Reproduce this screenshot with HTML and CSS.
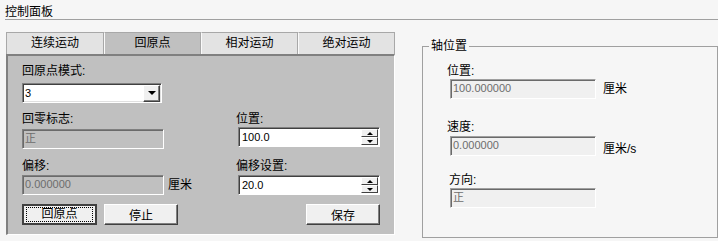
FILE: index.html
```html
<!DOCTYPE html>
<html lang="zh">
  <head>
    <meta charset="UTF-8" />
    <meta name="viewport" content="width=device-width, initial-scale=1.0" />
    <title>控制面板</title>
    <link rel="stylesheet" href="styles.css">
  </head>
  <body>
    <div class="window">
      <div class="window-title">控制面板</div>
      <div class="window-body">
        <div class="tab-area">
          <div class="tabs">
            <div class="tab">连续运动</div>
            <div class="tab active">回原点</div>
            <div class="tab">相对运动</div>
            <div class="tab">绝对运动</div>
          </div>
          <div class="tab-panel">
            <label class="field-label">回原点模式:</label>
            <div class="combo">
              <span class="combo-value">3</span>
              <span class="combo-button"><i class="arrow-down"></i></span>
            </div>

            <div class="form-grid">
              <div class="cell">
                <label class="field-label">回零标志:</label>
                <div class="textbox disabled gap-3">正</div>
              </div>
              <div class="cell">
                <label class="field-label">位置:</label>
                <div class="spin gap-1">
                  <span class="spin-value">100.0</span>
                  <span class="spin-buttons">
                    <span class="spin-btn"><i class="arrow-up"></i></span>
                    <span class="spin-btn"><i class="arrow-down small"></i></span>
                  </span>
                </div>
              </div>
              <div class="cell">
                <label class="field-label">偏移:</label>
                <div class="with-unit gap-2">
                  <div class="textbox disabled">0.000000</div>
                  <span class="unit">厘米</span>
                </div>
              </div>
              <div class="cell">
                <label class="field-label">偏移设置:</label>
                <div class="spin gap-2">
                  <span class="spin-value">20.0</span>
                  <span class="spin-buttons">
                    <span class="spin-btn"><i class="arrow-up"></i></span>
                    <span class="spin-btn"><i class="arrow-down small"></i></span>
                  </span>
                </div>
              </div>
            </div>

            <div class="button-row">
              <button class="btn default"><span class="focus-rect">回原点</span></button>
              <button class="btn">停止</button>
              <button class="btn save">保存</button>
            </div>
          </div>
        </div>

        <fieldset class="group">
          <legend>轴位置</legend>
          <div class="group-body">
            <label class="field-label first">位置:</label>
            <div class="axis-row gap-1">
              <div class="textbox readonly">100.000000</div>
              <span class="unit">厘米</span>
            </div>
            <label class="field-label second">速度:</label>
            <div class="axis-row low gap-2">
              <div class="textbox readonly">0.000000</div>
              <span class="unit">厘米/s</span>
            </div>
            <label class="field-label third">方向:</label>
            <div class="axis-row gap-1">
              <div class="textbox readonly">正</div>
            </div>
          </div>
        </fieldset>
      </div>
    </div>
  </body>
</html>
```

FILE: styles.css
```css
* {
  margin: 0;
  padding: 0;
  box-sizing: border-box;
}

body {
  font-family: "Liberation Sans", "Noto Sans CJK SC", sans-serif;
  font-size: 12px;
  color: #000;
  background-color: #f6f6f6;
  width: 718px;
  height: 241px;
  overflow: hidden;
}

.window-title {
  margin-left: 5px;
  padding-top: 6px;
  height: 20px;
  line-height: 13px;
  border-bottom: 1px solid #a0a0a0;
}

.window-body {
  display: flex;
  align-items: flex-start;
}

/* tabs */
.tab-area {
  margin: 12px 0 0 6px;
  width: 389px;
}

.tabs {
  display: flex;
  height: 22px;
}

.tab {
  width: 97px;
  line-height: 20px;
  text-align: center;
  background-color: #e3e3e3;
  border: 1px solid #a8a8a8;
  border-bottom: none;
  border-left-color: #fafafa;
}

.tab:first-child {
  width: 98px;
  border-left-color: #a8a8a8;
}

.tab.active {
  background-color: #c0c0c0;
}

.tab-panel {
  height: 181px;
  background-color: #c0c0c0;
  border-top: 2px solid #808080;
  border-left: 2px solid #808080;
  border-right: 1px solid #fff;
  border-bottom: 1px solid #fff;
  padding: 8px 14px 0 14px;
}

.field-label {
  display: block;
  line-height: 14px;
}

/* combo */
.combo {
  margin-top: 5px;
  width: 140px;
  height: 20px;
  display: flex;
  align-items: center;
  background-color: #fff;
  border: 1px solid;
  border-color: #808080 #fff #fff #808080;
  box-shadow: inset 1px 1px #404040, inset -1px -1px #e0e0e0;
}

.combo-value {
  flex: 1;
  padding-left: 2px;
  font-size: 11px;
}

.combo-button {
  width: 17px;
  height: 17px;
  margin-right: 1px;
  display: flex;
  align-items: center;
  justify-content: center;
  background-color: #f0f0f0;
  border: 1px solid;
  border-color: #fff #404040 #404040 #fff;
  box-shadow: inset -1px -1px #808080;
}

.arrow-down {
  width: 0;
  height: 0;
  border-left: 4px solid transparent;
  border-right: 4px solid transparent;
  border-top: 4px solid #000;
}

.arrow-down.small,
.arrow-up {
  border-left-width: 3px;
  border-right-width: 3px;
  border-top-width: 3px;
}

.arrow-up {
  width: 0;
  height: 0;
  border-left: 3px solid transparent;
  border-right: 3px solid transparent;
  border-top: none;
  border-bottom: 3px solid #000;
}

/* grid */
.form-grid {
  display: grid;
  grid-template-columns: 214px 144px;
  row-gap: 10px;
  margin-top: 9px;
}

.gap-1 { margin-top: 1px; }
.gap-2 { margin-top: 2px; }
.gap-3 { margin-top: 3px; }

.textbox {
  width: 142px;
  height: 20px;
  line-height: 16px;
  padding-left: 2px;
  font-size: 11px;
  border: 1px solid;
  border-color: #808080 #fff #fff #808080;
  box-shadow: inset 1px 1px #6a6a6a;
}

.textbox.disabled {
  background-color: #c0c0c0;
  color: #6d6d6d;
}

.with-unit {
  display: flex;
  align-items: center;
  gap: 4px;
}

.unit {
  line-height: 14px;
}

/* spin box */
.spin {
  margin-left: 2px;
  width: 142px;
  height: 20px;
  display: flex;
  background-color: #fff;
  border: 1px solid;
  border-color: #808080 #fff #fff #808080;
  box-shadow: inset 1px 1px #404040;
}

.spin-value {
  flex: 1;
  padding: 2px 0 0 3px;
  font-size: 11px;
  line-height: 14px;
}

.spin-buttons {
  display: flex;
  flex-direction: column;
  margin: 1px 1px 1px 0;
}

.spin-btn {
  width: 17px;
  height: 8px;
  display: flex;
  align-items: center;
  justify-content: center;
  background-color: #f0f0f0;
  border: 1px solid;
  border-color: #fff #404040 #404040 #fff;
}

/* buttons */
.button-row {
  display: flex;
  gap: 7px;
  margin-top: 9px;
}

.btn {
  width: 74px;
  height: 21px;
  font: inherit;
  background-color: #f0f0f0;
  border: 1px solid;
  border-color: #fff #404040 #404040 #fff;
  box-shadow: inset -1px -1px #808080;
  display: flex;
  align-items: center;
  justify-content: center;
}

.btn.default {
  width: 75px;
  border: 2px solid #404040;
  box-shadow: none;
}

.focus-rect {
  width: 67px;
  height: 15px;
  line-height: 13px;
  text-align: center;
  border: 1px dotted #000;
}

.btn.save {
  margin-left: auto;
}

/* axis group */
.group {
  margin: 19px 0 0 27px;
  width: 296px;
  height: 199px;
  padding: 0 6px;
  border: 1px solid #a0a0a0;
}

.group legend {
  padding: 0 2px;
  line-height: 14px;
}

.group-body {
  padding-left: 18px;
}

.field-label.first { margin-top: 11px; }
.field-label.second { margin-top: 21px; }
.field-label.third { margin-top: 17px; padding-left: 2px; }

.axis-row {
  display: flex;
  align-items: center;
  gap: 7px;
  padding-left: 3px;
}

.axis-row.low {
  align-items: flex-end;
}

.textbox.readonly {
  width: 146px;
  background-color: #f0f0f0;
  color: #6d6d6d;
  border-color: #a0a0a0 #fff #fff #a0a0a0;
}
```
